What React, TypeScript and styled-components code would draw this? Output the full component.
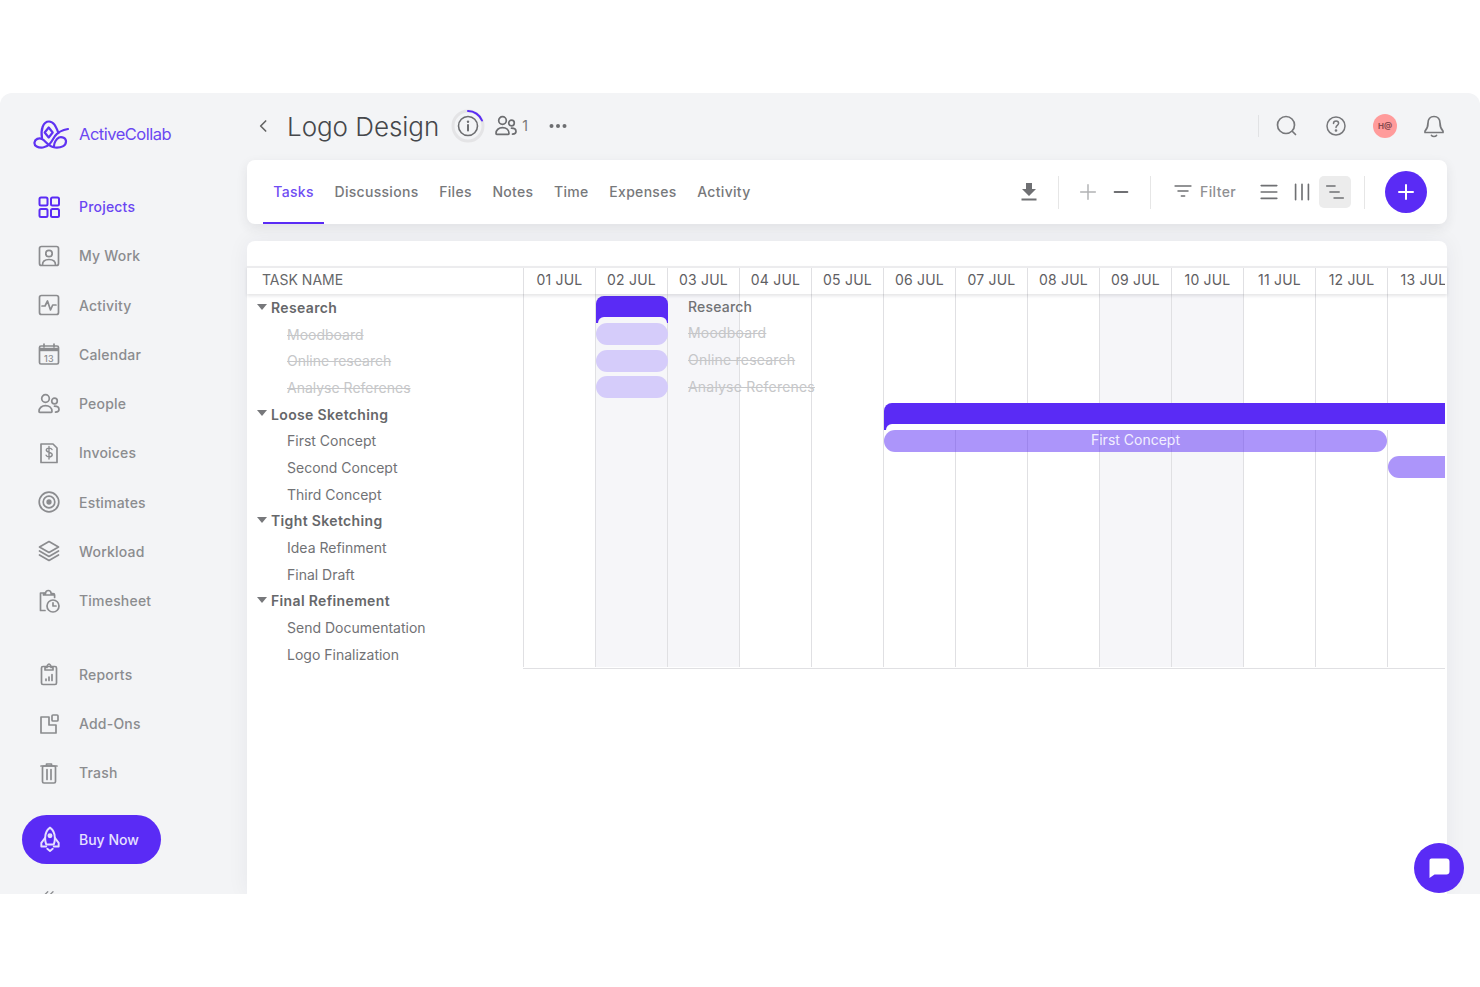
import React from "react";
import styled, { createGlobalStyle } from "styled-components";

const PURPLE = "#5a2bf5";
const GREY = "#8b8c8f";

const Global = createGlobalStyle`
  html, body { margin: 0; padding: 0; background: #ffffff; }
  body { font-family: Inter, "Liberation Sans", sans-serif; height: 987px; overflow: hidden; }
  * { box-sizing: border-box; }
`;

const Frame = styled.div`
  position: relative;
  margin-top: 93px;
  height: 801px;
  display: flex;
  overflow: hidden;
  background: #f3f4f6;
  border-radius: 12px 12px 0 0;
`;

/* ---------- sidebar ---------- */
const Sidebar = styled.aside`
  width: 247px;
  flex: none;
  display: flex;
  flex-direction: column;
  padding-top: 24px;
  > * { flex: none; }
`;
const Brand = styled.div`
  display: flex;
  align-items: center;
  height: 34px;
  margin: 0 0 31px 32px;
  gap: 10px;
`;
const BrandName = styled.span`
  font-size: 16.5px;
  font-weight: 400;
  letter-spacing: -0.5px;
  color: #6b47f2;
`;
const NavGroup = styled.nav<{ $gap?: number }>`
  display: flex;
  flex-direction: column;
  margin-top: ${(p) => p.$gap ?? 0}px;
`;
const NavItem = styled.a<{ $active?: boolean }>`
  display: flex;
  align-items: center;
  height: 49.25px;
  padding-left: 37px;
  gap: 18px;
  font-size: 14px;
  font-weight: 500;
  letter-spacing: 0.2px;
  color: ${(p) => (p.$active ? "#6a45f2" : GREY)};
  svg { flex: none; color: ${(p) => (p.$active ? PURPLE : GREY)}; }
`;
const BuyNow = styled.button`
  display: flex;
  align-items: center;
  width: 139px;
  height: 49px;
  margin: 17px 0 0 22px;
  padding: 0 0 0 15px;
  gap: 16px;
  border: 0;
  border-radius: 25px;
  background: ${PURPLE};
  color: #e6e0ff;
  font: 500 14px Inter, "Liberation Sans", sans-serif;
  svg { flex: none; }
`;
const Collapse = styled.div`
  margin: 24px 0 0 41px;
  color: ${GREY};
  line-height: 0;
`;

/* ---------- main ---------- */
const Main = styled.main`
  flex: 1;
  min-width: 0;
  margin-right: 33px;
  display: flex;
  flex-direction: column;
`;
const TopBar = styled.header`
  height: 67px;
  flex: none;
  display: flex;
  align-items: center;
  padding: 0 1px 2px 0;
`;
const Back = styled.span`
  margin: 0 0 0 7px;
  width: 16px;
  height: 20px;
  line-height: 0;
  color: #666;
`;
const Title = styled.h1`
  margin: 1px 0 0 17px;
  font-size: 26px;
  font-weight: 300;
  letter-spacing: -0.05px;
  color: #45474b;
`;
const Progress = styled.span`
  margin-left: 12px;
  line-height: 0;
`;
const Members = styled.span`
  display: flex;
  align-items: center;
  margin-left: 9px;
  gap: 4px;
  font-size: 14px;
  color: #777;
  svg { color: #6d6e71; }
`;
const More = styled.span`
  margin-left: 20px;
  line-height: 0;
  color: #6d6e71;
`;
const TopRight = styled.div`
  margin-left: auto;
  display: flex;
  align-items: center;
  gap: 25px;
  color: #77787b;
  svg { display: block; }
`;
const TopDivider = styled.span`
  width: 1px;
  height: 22px;
  margin-right: -9px;
  background: #e1e2e4;
`;
const Avatar = styled.span`
  width: 24px;
  height: 24px;
  border-radius: 50%;
  background: #ff9b9b;
  display: flex;
  align-items: center;
  justify-content: center;
  font-size: 8px;
  font-weight: 700;
  color: #8a4a4e;
`;

const TabCard = styled.section`
  height: 64px;
  flex: none;
  display: flex;
  align-items: stretch;
  padding: 0 20px 0 16px;
  background: #fff;
  border-radius: 8px;
  box-shadow: 0 4px 12px rgba(40, 40, 60, 0.09);
`;
const Tab = styled.a<{ $active?: boolean }>`
  display: flex;
  align-items: center;
  padding: 0 10.35px;
  font-size: 14px;
  font-weight: 500;
  letter-spacing: 0.3px;
  color: ${(p) => (p.$active ? "#6f4df3" : "#77787b")};
  border-bottom: 2px solid ${(p) => (p.$active ? PURPLE : "transparent")};
`;
const Tools = styled.div`
  margin-left: auto;
  display: flex;
  align-items: center;
`;
const ToolButton = styled.span<{ $selected?: boolean; $faint?: boolean }>`
  width: 32px;
  height: 32px;
  margin-left: 1px;
  display: flex;
  align-items: center;
  justify-content: center;
  border-radius: 5px;
  background: ${(p) => (p.$selected ? "#ececec" : "transparent")};
  color: ${(p) => (p.$faint ? "#b1b2b4" : "#6f7073")};
`;
const ToolDivider = styled.span<{ $left: number; $right: number }>`
  width: 1px;
  height: 33px;
  margin: 0 ${(p) => p.$right}px 0 ${(p) => p.$left}px;
  background: #e6e6e6;
`;
const FilterLabel = styled.span`
  display: flex;
  align-items: center;
  gap: 7px;
  margin: 0 16px 2px 0;
  font-size: 14px;
  font-weight: 500;
  letter-spacing: 0.35px;
  color: #8f9093;
  svg { color: #6f7073; }
`;
const AddButton = styled.span`
  width: 42px;
  height: 42px;
  border-radius: 50%;
  background: ${PURPLE};
  color: #fff;
  display: flex;
  align-items: center;
  justify-content: center;
`;

/* ---------- gantt ---------- */
const GanttPanel = styled.section`
  flex: 1;
  margin-top: 17px;
  padding-top: 25px;
  background: #fff;
  border-radius: 8px 8px 0 0;
  box-shadow: 0 0 22px rgba(40, 40, 60, 0.06);
`;
const GanttHead = styled.div`
  position: relative;
  z-index: 1;
  display: flex;
  height: 28px;
  border-top: 2px solid #ececee;
  box-shadow: 0 2px 3px rgba(40, 40, 60, 0.12);
  background: #fff;
`;
const TaskHead = styled.div`
  width: 276px;
  flex: none;
  padding-left: 15px;
  font-size: 14px;
  line-height: 24px;
  color: #66676a;
`;
const HeadDays = styled.div`
  width: 922px;
  overflow: hidden;
  display: grid;
  grid-template-columns: repeat(13, 72px);
`;
const HeadDay = styled.div`
  border-left: 1px solid #e0e0e3;
  text-align: center;
  font-size: 14px;
  line-height: 24px;
  letter-spacing: 0.2px;
  white-space: nowrap;
  color: #5f6063;
`;
const GanttBody = styled.div`
  display: flex;
`;
const TaskList = styled.div`
  width: 276px;
  flex: none;
  padding-top: 0.3px;
`;
const TaskRow = styled.div<{ $group?: boolean; $done?: boolean }>`
  height: 26.67px;
  display: flex;
  align-items: center;
  gap: 4px;
  padding-left: ${(p) => (p.$group ? 10 : 40)}px;
  font-size: 14px;
  font-weight: ${(p) => (p.$group ? 600 : 400)};
  letter-spacing: ${(p) => (p.$group ? 0.35 : 0)}px;
  color: ${(p) => (p.$done ? "#c6c7c9" : p.$group ? "#66676a" : "#717275")};
  text-decoration: ${(p) => (p.$done ? "line-through" : "none")};
`;
const Caret = styled.span`
  width: 0;
  height: 0;
  border-left: 5.5px solid transparent;
  border-right: 5.5px solid transparent;
  border-top: 6px solid #77787b;
  margin-top: -2px;
`;
const Chart = styled.div`
  width: 922px;
  height: 375px;
  overflow: hidden;
  display: grid;
  grid-template-columns: repeat(13, 72px);
  grid-template-rows: repeat(14, 26.67px);
  border-bottom: 1px solid #e0e0e3;
`;
const DayColumn = styled.div<{ $col: number; $shade?: boolean }>`
  grid-column: ${(p) => p.$col};
  grid-row: 1 / -1;
  border-left: 1px solid #e0e0e3;
  background: ${(p) => (p.$shade ? "#f6f6f9" : "#fff")};
`;
const GroupBar = styled.div<{ $row: number; $from: number; $to: number; $round?: boolean; $inner: string }>`
  position: relative;
  grid-row: ${(p) => p.$row};
  grid-column: ${(p) => p.$from} / ${(p) => p.$to};
  height: 27px;
  margin: 2px ${(p) => (p.$round ? -1 : 0)}px 0 1px;
  background: ${PURPLE};
  border-radius: ${(p) => (p.$round ? "8px 8px 0 0" : "8px 0 0 0")};
  &::after {
    content: "";
    position: absolute;
    left: 1.5px;
    right: ${(p) => (p.$round ? 1.5 : 0)}px;
    bottom: 0;
    height: 6px;
    background: ${(p) => p.$inner};
    border-radius: 6px 6px 0 0;
  }
`;
const TaskBar = styled.div<{ $row: number; $from: number; $to: number; $light?: boolean; $openEnd?: boolean }>`
  grid-row: ${(p) => p.$row};
  grid-column: ${(p) => p.$from} / ${(p) => p.$to};
  position: relative;
  align-self: center;
  height: 22px;
  margin: 0 ${(p) => (p.$light ? -1 : 0)}px 0 1px;
  padding-bottom: 2px;
  display: flex;
  align-items: center;
  justify-content: center;
  border-radius: ${(p) => (p.$openEnd ? "11px 0 0 11px" : "11px")};
  background: ${(p) => (p.$light ? "#d5ccfa" : "rgba(90, 43, 245, 0.5)")};
  font-size: 14px;
  color: #f2efff;
`;
const BarLabel = styled.div<{ $row: number; $done?: boolean }>`
  grid-row: ${(p) => p.$row};
  grid-column: 3 / 6;
  position: relative;
  align-self: center;
  margin: -2px 0 0 21px;
  font-size: 14px;
  letter-spacing: 0.2px;
  white-space: nowrap;
  font-weight: ${(p) => (p.$done ? 400 : 500)};
  color: ${(p) => (p.$done ? "#c6c7c9" : "#717275")};
  text-decoration: ${(p) => (p.$done ? "line-through" : "none")};
`;
const ChatButton = styled.span`
  position: absolute;
  right: 16px;
  bottom: 1px;
  width: 50px;
  height: 50px;
  border-radius: 50%;
  background: ${PURPLE};
  display: flex;
  align-items: center;
  justify-content: center;
`;

/* ---------- icons ---------- */
const Ic: React.FC<{ children: React.ReactNode; size?: number; sw?: number }> = ({ children, size = 24, sw = 1.7 }) => (
  <svg width={size} height={size} viewBox="0 0 24 24" fill="none" stroke="currentColor" strokeWidth={sw} strokeLinecap="round" strokeLinejoin="round">
    {children}
  </svg>
);

const UsersGlyph = () => (
  <>
    <circle cx="8.5" cy="6.5" r="3.8" />
    <path d="M2 19.5c0-3.6 2.8-5.8 6.5-5.8s6.5 2.2 6.5 5.8c0 .5-.3.8-.8.8H2.8c-.5 0-.8-.3-.8-.8z" />
    <circle cx="17.5" cy="9" r="2.8" />
    <path d="M17.5 14.2c2.6 0 4.5 1.3 4.5 3.3 0 1.6-1.3 2.5-3.5 2.6" />
  </>
);

const icons: Record<string, React.ReactNode> = {
  Projects: (
    <Ic sw={2}>
      <rect x="2.5" y="2.5" width="8" height="8" rx="1.5" />
      <rect x="14" y="2.5" width="8" height="8" rx="1.5" />
      <rect x="2.5" y="14" width="8" height="8" rx="1.5" />
      <rect x="14" y="14" width="8" height="8" rx="1.5" />
    </Ic>
  ),
  "My Work": (
    <Ic>
      <rect x="2.5" y="2.5" width="19" height="19" rx="2" />
      <circle cx="12" cy="9.5" r="3.2" />
      <path d="M5.5 21c0-3.6 2.8-5.5 6.5-5.500s6.500 1.900 6.500 5.500" />
    </Ic>
  ),
  Activity: (
    <Ic>
      <rect x="2.5" y="2.5" width="19" height="19" rx="2" />
      <path d="M5 13h3l2.500-5 3 9 2.200-5H19" />
    </Ic>
  ),
  Calendar: (
    <Ic>
      <rect x="2.500" y="4" width="19" height="18" rx="1.500" />
      <path d="M2.500 7.500h19" strokeWidth="3.400" strokeLinecap="butt" />
      <path d="M7 2v3M17 2v3" />
      <text x="12" y="19.500" textAnchor="middle" fontSize="9" fontFamily="Inter, sans-serif" stroke="none" fill="currentColor">13</text>
    </Ic>
  ),
  People: <Ic><UsersGlyph /></Ic>,
  Invoices: (
    <Ic>
      <path d="M4 3h12l4 4v14.500H4z" />
      <path d="M15 8.500c-.5-1-1.500-1.400-2.900-1.400-1.700 0-2.800.8-2.800 2 0 3 5.900 1.500 5.900 4.600 0 1.300-1.200 2.100-3 2.100-1.500 0-2.600-.5-3.100-1.600M12 5.500v12.500" strokeWidth="1.400" />
    </Ic>
  ),
  Estimates: (
    <Ic>
      <circle cx="12" cy="12" r="9.800" />
      <circle cx="12" cy="12" r="5.800" />
      <circle cx="12" cy="12" r="1.800" fill="currentColor" />
    </Ic>
  ),
  Workload: (
    <Ic>
      <path d="M12 2.500 21.500 8 12 13.500 2.500 8z" />
      <path d="M2.500 12 12 17.500 21.500 12" />
      <path d="M2.500 16 12 21.500 21.500 16" />
    </Ic>
  ),
  Timesheet: (
    <Ic>
      <path d="M8 4H3.500v17.500H8" />
      <path d="M6.500 6V4.500h2c0-1.500 1.200-3 2.800-3s2.800 1.500 2.800 3h2c1 0 1.500.7 1.500 1.500v2.500M6.500 6h11" />
      <circle cx="16" cy="17" r="6" />
      <path d="M16 13.800V17h3" />
    </Ic>
  ),
  Reports: (
    <Ic>
      <rect x="4.500" y="4.500" width="15" height="18" rx="1.500" />
      <path d="M8 8h8V5.500h-2c0-1.500-1-3.500-2-3.500s-2 2-2 3.500H8z" />
      <path d="M9 18.500v-1.500M12 18.500v-3.500M15 18.500v-6" />
    </Ic>
  ),
  "Add-Ons": (
    <Ic>
      <path d="M12 5H4v16h15v-8h-7z" />
      <rect x="15" y="3" width="6" height="6" rx="1" />
    </Ic>
  ),
  Trash: (
    <Ic>
      <path d="M4 5h16M9.500 5V3h5v2" />
      <rect x="5.500" y="5" width="13" height="17" rx="1.500" />
      <path d="M10 8.500v10M14 8.500v10" />
    </Ic>
  ),
};

const Logo = () => (
  <svg width="37" height="32" viewBox="0 0 37 32" fill="none" stroke="#5f33f2" strokeWidth="2.200" strokeLinecap="round" strokeLinejoin="round">
    <path d="M10 20C8.500 12 11 3.500 17 3.500C22 3.500 24 9 26.500 15" />
    <path d="M16.700 9.500l4 5-4 5-4-5z" />
    <path d="M36 11C30 12 26 14 23 18C20 23 17 29 11 29.500C6 30 2 28 2.500 24.500C3 21 7 19.500 10 21C14 23 16 29 23 29.500C29 30 34 28 34 23.500C34 20 30 18.500 27 19.500C24 21 22 25 22 28" />
  </svg>
);

const Rocket = () => (
  <Ic size={26} sw={1.800}>
    <path d="M12 1.500c3.200 2.300 4.500 6 4.500 9.500 0 2.500-.4 4.500-1 6h-7c-.6-1.500-1-3.500-1-6 0-3.500 1.300-7.200 4.500-9.500z" />
    <circle cx="12" cy="9" r="1.400" fill="currentColor" />
    <path d="M7.500 11 4 15.500V19h4.500M16.500 11l3.500 4.500V19h-4.500" />
    <path d="M9.500 21l2.500 2 2.500-2" />
  </Ic>
);

const nav1 = ["My Work", "Activity", "Calendar", "People", "Invoices", "Estimates", "Workload", "Timesheet"];
const nav2 = ["Reports", "Add-Ons", "Trash"];
const tabs = ["Tasks", "Discussions", "Files", "Notes", "Time", "Expenses", "Activity"];
const days = ["01", "02", "03", "04", "05", "06", "07", "08", "09", "10", "11", "12", "13"];
const shaded = [2, 3, 9, 10];

const tasks: { name: string; group?: boolean; done?: boolean }[] = [
  { name: "Research", group: true },
  { name: "Moodboard", done: true },
  { name: "Online research", done: true },
  { name: "Analyse Referenes", done: true },
  { name: "Loose Sketching", group: true },
  { name: "First Concept" },
  { name: "Second Concept" },
  { name: "Third Concept" },
  { name: "Tight Sketching", group: true },
  { name: "Idea Refinment" },
  { name: "Final Draft" },
  { name: "Final Refinement", group: true },
  { name: "Send Documentation" },
  { name: "Logo Finalization" },
];

export default function App() {
  return (
    <>
      <Global />
      <Frame>
        <Sidebar>
          <Brand>
            <Logo />
            <BrandName>ActiveCollab</BrandName>
          </Brand>
          <NavGroup>
            <NavItem $active>{icons.Projects}Projects</NavItem>
            {nav1.map((n) => (
              <NavItem key={n}>{icons[n]}{n}</NavItem>
            ))}
          </NavGroup>
          <NavGroup $gap={24.5}>
            {nav2.map((n) => (
              <NavItem key={n}>{icons[n]}{n}</NavItem>
            ))}
          </NavGroup>
          <BuyNow><Rocket />Buy Now</BuyNow>
          <Collapse>
            <Ic size={18}><path d="M9 5 3 11l6 6M16 5l-6 6 6 6" /></Ic>
          </Collapse>
        </Sidebar>

        <Main>
          <TopBar>
            <Back>
              <Ic size={20} sw={2}><path d="M14 6l-6 6 6 6" /></Ic>
            </Back>
            <Title>Logo Design</Title>
            <Progress>
              <svg width="34" height="34" viewBox="0 0 34 34" fill="none">
                <circle cx="17" cy="17" r="15" stroke="#e4e4e6" strokeWidth="3" />
                <path d="M17 2a15 15 0 0 1 14 9.500" stroke={PURPLE} strokeWidth="2" strokeLinecap="round" />
                <circle cx="17" cy="17" r="9.500" stroke="#6d6e71" strokeWidth="1.600" />
                <path d="M17 16v5.500" stroke="#6d6e71" strokeWidth="2" strokeLinecap="round" />
                <circle cx="17" cy="12.800" r="1.200" fill="#6d6e71" />
              </svg>
            </Progress>
            <Members>
              <Ic size={24}><UsersGlyph /></Ic>1
            </Members>
            <More>
              <svg width="20" height="6" viewBox="0 0 20 6" fill="currentColor">
                <circle cx="3.500" cy="3" r="2" /><circle cx="10" cy="3" r="2" /><circle cx="16.500" cy="3" r="2" />
              </svg>
            </More>
            <TopRight>
              <TopDivider />
              <Ic><circle cx="11" cy="11" r="8.500" /><path d="M17.500 17.500 20.500 20.500" /></Ic>
              <Ic sw={1.500}>
                <circle cx="12" cy="12" r="9" />
                <path d="M9.500 9.500c0-1.500 1.100-2.500 2.600-2.500s2.500 1 2.500 2.300c0 2-2.600 2.100-2.600 4.200" />
                <circle cx="12" cy="16.500" r=".6" fill="currentColor" />
              </Ic>
              <Avatar>H@</Avatar>
              <Ic>
                <path d="M12 2.500c-3.800 0-6 2.800-6 6.500 0 4.500-1.500 6.500-3 8v1.500h18V17c-1.500-1.500-3-3.500-3-8 0-3.700-2.200-6.500-6-6.500z" />
                <path d="M9.500 21.500c.7.800 1.500 1 2.500 1s1.800-.2 2.500-1" />
              </Ic>
            </TopRight>
          </TopBar>

          <TabCard>
            {tabs.map((t, i) => (
              <Tab key={t} $active={i === 0}>{t}</Tab>
            ))}
            <Tools>
              <ToolButton>
                <svg width="18" height="20" viewBox="0 0 18 20" fill="currentColor">
                  <path d="M6 1h6v6h4l-7 7-7-7h4z" />
                  <rect x="1.500" y="16.500" width="15" height="2" />
                </svg>
              </ToolButton>
              <ToolDivider $left={13} $right={12} />
              <ToolButton $faint>
                <Ic size={22} sw={1.600}><path d="M12 4v16M4 12h16" /></Ic>
              </ToolButton>
              <ToolButton>
                <Ic size={22} sw={2}><path d="M5 12h14" /></Ic>
              </ToolButton>
              <ToolDivider $left={13} $right={22} />
              <FilterLabel>
                <Ic size={20} sw={1.800}><path d="M2.500 6h19M6 12h12M10 18h4" /></Ic>
                Filter
              </FilterLabel>
              <ToolButton>
                <Ic size={22} sw={1.800}><path d="M3.500 5h17M3.500 12h17M3.500 19h17" /></Ic>
              </ToolButton>
              <ToolButton>
                <Ic size={22} sw={1.800}><path d="M5 3.500v17M12 3.500v17M19 3.500v17" /></Ic>
              </ToolButton>
              <ToolButton $selected>
                <Ic size={22} sw={1.800}><path d="M3 5.500h9M6.500 12h10M11 18.500h10" /></Ic>
              </ToolButton>
              <ToolDivider $left={13} $right={20} />
              <AddButton>
                <Ic size={24} sw={2}><path d="M12 5v14M5 12h14" /></Ic>
              </AddButton>
            </Tools>
          </TabCard>

          <GanttPanel>
            <GanttHead>
              <TaskHead>TASK NAME</TaskHead>
              <HeadDays>
                {days.map((d) => (
                  <HeadDay key={d}>{d} JUL</HeadDay>
                ))}
              </HeadDays>
            </GanttHead>
            <GanttBody>
              <TaskList>
                {tasks.map((t) => (
                  <TaskRow key={t.name} $group={t.group} $done={t.done}>
                    {t.group && <Caret />}
                    {t.name}
                  </TaskRow>
                ))}
              </TaskList>
              <Chart>
                {days.map((d, i) => (
                  <DayColumn key={d} $col={i + 1} $shade={shaded.includes(i + 1)} />
                ))}
                <GroupBar $row={1} $from={2} $to={3} $round $inner="#f6f6f9" />
                <TaskBar $row={2} $from={2} $to={3} $light />
                <TaskBar $row={3} $from={2} $to={3} $light />
                <TaskBar $row={4} $from={2} $to={3} $light />
                <BarLabel $row={1}>Research</BarLabel>
                <BarLabel $row={2} $done>Moodboard</BarLabel>
                <BarLabel $row={3} $done>Online research</BarLabel>
                <BarLabel $row={4} $done>Analyse Referenes</BarLabel>
                <GroupBar $row={5} $from={6} $to={14} $inner="#ffffff" />
                <TaskBar $row={6} $from={6} $to={13}>First Concept</TaskBar>
                <TaskBar $row={7} $from={13} $to={14} $openEnd />
              </Chart>
            </GanttBody>
          </GanttPanel>
        </Main>

        <ChatButton>
          <svg width="26" height="26" viewBox="0 0 26 26" fill="#ffffff">
            <path d="M5.500 3.500h15c1.700 0 3 1.300 3 3v10c0 1.700-1.300 3-3 3H8.500l-5 3.500V5.500c0-1.100.9-2 2-2z" />
          </svg>
        </ChatButton>
      </Frame>
    </>
  );
}
